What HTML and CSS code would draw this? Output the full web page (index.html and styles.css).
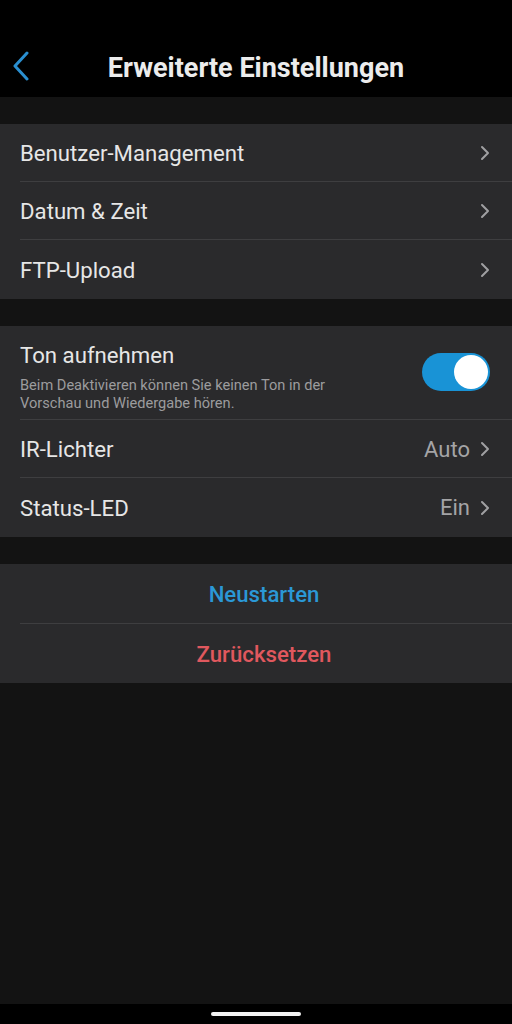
FILE: index.html
```html
<!DOCTYPE html>
<html lang="de">
<head>
<meta charset="utf-8">
<link rel="stylesheet" href="styles.css">
</head>
<body>
<div class="screen">
  <header class="topbar">
    <svg class="back" width="20" height="30" viewBox="0 0 20 30"><path d="M16 2 L4 15 L16 28" fill="none" stroke="#2a8fd0" stroke-width="3" stroke-linecap="round" stroke-linejoin="round"/></svg>
    <h1 class="title">Erweiterte Einstellungen</h1>
  </header>
  <main class="content">
    <section class="group">
      <div class="row"><span class="label">Benutzer-Management</span><span class="trail"><svg class="chev" width="10" height="16" viewBox="0 0 10 16"><path d="M2 2 L8 8 L2 14" fill="none" stroke="#a0a0a2" stroke-width="2" stroke-linecap="round" stroke-linejoin="round"/></svg></span></div>
      <div class="row"><span class="label">Datum &amp; Zeit</span><span class="trail"><svg class="chev" width="10" height="16" viewBox="0 0 10 16"><path d="M2 2 L8 8 L2 14" fill="none" stroke="#a0a0a2" stroke-width="2" stroke-linecap="round" stroke-linejoin="round"/></svg></span></div>
      <div class="row"><span class="label">FTP-Upload</span><span class="trail"><svg class="chev" width="10" height="16" viewBox="0 0 10 16"><path d="M2 2 L8 8 L2 14" fill="none" stroke="#a0a0a2" stroke-width="2" stroke-linecap="round" stroke-linejoin="round"/></svg></span></div>
    </section>
    <section class="group">
      <div class="row row-tall">
        <div class="text-block">
          <span class="label">Ton aufnehmen</span>
          <span class="desc">Beim Deaktivieren können Sie keinen Ton in der Vorschau und Wiedergabe hören.</span>
        </div>
        <span class="toggle"><span class="knob"></span></span>
      </div>
      <div class="row"><span class="label">IR-Lichter</span><span class="trail"><span class="value">Auto</span><svg class="chev" width="10" height="16" viewBox="0 0 10 16"><path d="M2 2 L8 8 L2 14" fill="none" stroke="#a0a0a2" stroke-width="2" stroke-linecap="round" stroke-linejoin="round"/></svg></span></div>
      <div class="row"><span class="label">Status-LED</span><span class="trail"><span class="value">Ein</span><svg class="chev" width="10" height="16" viewBox="0 0 10 16"><path d="M2 2 L8 8 L2 14" fill="none" stroke="#a0a0a2" stroke-width="2" stroke-linecap="round" stroke-linejoin="round"/></svg></span></div>
    </section>
    <section class="group">
      <div class="row row-action"><span class="action blue">Neustarten</span></div>
      <div class="row row-action"><span class="action red">Zurücksetzen</span></div>
    </section>
  </main>
  <footer class="navbar"><span class="home"></span></footer>
</div>
</body>
</html>
```

FILE: styles.css
```css
* { box-sizing: border-box; }
html, body { margin: 0; padding: 0; background: #131313; }
body { font-family: Roboto, "Noto Sans", sans-serif; color: #e6e6e6; }
.screen { width: 512px; height: 1024px; display: flex; flex-direction: column; background: #131313; }
.topbar { height: 97px; background: #000; display: flex; align-items: center; justify-content: center; position: relative; padding-top: 38px; }
.back { position: absolute; left: 11px; top: 51px; }
.title { margin: 0; font-size: 27px; font-weight: 700; color: #ececec; }
.content { flex: 1; padding-top: 27px; display: flex; flex-direction: column; gap: 27px; }
.group { background: #2a2a2c; display: flex; flex-direction: column; }
.row { height: 58px; flex: none; display: flex; align-items: center; justify-content: space-between; padding: 0 22px 0 20px; position: relative; }
.row + .row::before { content: ""; position: absolute; left: 20px; right: 0; top: -1px; height: 1px; background: #3e3e40; }
.row:last-child { height: 59px; }
.label { font-size: 22.2px; color: #e6e6e6; }
.trail { display: flex; align-items: center; gap: 10px; }
.value { font-size: 22px; color: #a4a4a6; }
.chev { display: block; }
.row.row-tall { height: 94px; align-items: flex-start; padding-top: 16px; padding-right: 22px; }
.text-block { display: flex; flex-direction: column; gap: 8px; }
.text-block .label { line-height: 26px; }
.desc { font-size: 14.6px; line-height: 18px; color: #9c9c9e; width: 340px; }
.toggle { width: 68px; height: 38px; border-radius: 19px; background: #1993d6; position: relative; margin-top: 11px; }
.knob { position: absolute; right: 2px; top: 2px; width: 34px; height: 34px; border-radius: 50%; background: #fff; }
.row.row-action { height: 60px; justify-content: center; padding: 0 0 0 16px; }
.row.row-action:last-child { height: 59px; }
.action { font-size: 22.2px; font-weight: 500; }
.blue { color: #2b98d6; }
.red { color: #e0585e; }
.navbar { height: 20px; background: #000; display: flex; justify-content: center; padding-top: 8px; }
.home { width: 90px; height: 4px; border-radius: 2px; background: #f2f2f2; }
```
